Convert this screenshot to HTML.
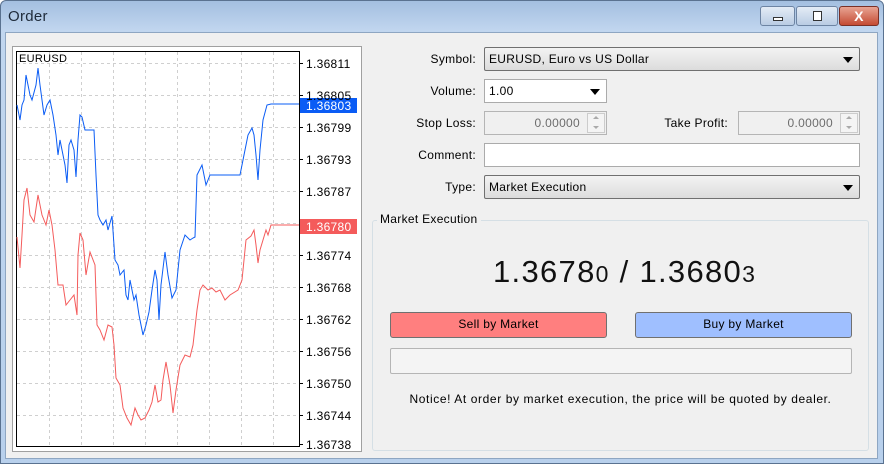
<!DOCTYPE html>
<html><head><meta charset="utf-8"><style>
*{box-sizing:border-box;margin:0;padding:0}
body{width:885px;height:464px;overflow:hidden;background:#fff;font-family:"Liberation Sans",sans-serif;font-size:12px;color:#000;position:relative;letter-spacing:0.3px}
.abs{position:absolute}
.frame{left:0;top:0;width:884px;height:464px;background:linear-gradient(#a3bfe0,#c1d6ef 30px,#b8d0ec);border:1px solid #5a7290;border-radius:6px 6px 0 0}
.client{left:5px;top:32px;width:873px;height:427px;background:#f0f0f0;border:1px solid #8ea6c2}
.lbl{text-align:right;width:120px;left:356px;font-size:12px}
.sel{background:linear-gradient(#f3f3f3,#dcdcdc);border:1px solid #707070;border-radius:2px;padding:4px 4px;font-size:12px}
.arr{position:absolute;right:6px;top:9px;width:0;height:0;border-left:5px solid transparent;border-right:5px solid transparent;border-top:6px solid #000}
.inp{background:#fff;border:1px solid #ababab;padding:4px;font-size:12px}
.dis{background:#f0f0f0;border:1px solid #b5b5b5;color:#6d6d6d;text-align:right;padding:4px 26px 4px 4px}
.spin{position:absolute;right:1px;top:1px;width:18px;height:20px;border:1px solid #ccc;background:#f4f4f4}
.spin:before{content:"";position:absolute;left:5px;top:2px;border-left:3px solid transparent;border-right:3px solid transparent;border-bottom:3px solid #aaa}
.spin:after{content:"";position:absolute;left:5px;top:12px;border-left:3px solid transparent;border-right:3px solid transparent;border-top:3px solid #aaa}
.btn{border:1px solid #707070;border-radius:3px;text-align:center;line-height:23px;font-size:12px}
.yl{left:306px;font-size:12px;color:#000}
</style></head><body>
<div class="abs frame"></div>
<div class="abs" style="left:8px;top:8px;font-size:15px;color:#1e2a3a">Order</div>
<div class="abs" style="left:760px;top:6px;width:35px;height:20px;border:1px solid #6d84a3;border-radius:3px;background:linear-gradient(#e4ecf6,#b9cce4)"><div class="abs" style="left:12px;top:10px;width:10px;height:4px;border:1px solid #333;background:#fff"></div></div>
<div class="abs" style="left:796px;top:6px;width:42px;height:20px;border:1px solid #6d84a3;border-radius:3px;background:linear-gradient(#e4ecf6,#b9cce4)"><div class="abs" style="left:16px;top:4px;width:9px;height:10px;border:1px solid #333;background:#fff"></div></div>
<div class="abs" style="left:839px;top:6px;width:40px;height:20px;border:1px solid #7a3026;border-radius:3px;background:linear-gradient(#e8a493,#c44b33);color:#fff;font-weight:bold;text-align:center;font-size:14px;line-height:18px">X</div>
<div class="abs client"></div>
<div class="abs" style="left:12px;top:46px;width:350px;height:406px;background:#fff;border:1px solid #a0a0a0"></div>
<svg class="abs" style="left:0;top:0" width="885" height="464">
<rect x="16.5" y="51.5" width="283" height="395" fill="#fff" stroke="#000"/>
<g stroke="#cfcfcf" stroke-dasharray="3,3">
<line x1="49.5" y1="52" x2="49.5" y2="446"/><line x1="81.5" y1="52" x2="81.5" y2="446"/><line x1="113.5" y1="52" x2="113.5" y2="446"/><line x1="145.5" y1="52" x2="145.5" y2="446"/><line x1="177.5" y1="52" x2="177.5" y2="446"/><line x1="209.5" y1="52" x2="209.5" y2="446"/><line x1="241.5" y1="52" x2="241.5" y2="446"/><line x1="273.5" y1="52" x2="273.5" y2="446"/>
<line x1="17" y1="63.5" x2="299" y2="63.5"/><line x1="17" y1="95.5" x2="299" y2="95.5"/><line x1="17" y1="127.5" x2="299" y2="127.5"/><line x1="17" y1="159.5" x2="299" y2="159.5"/><line x1="17" y1="191.5" x2="299" y2="191.5"/><line x1="17" y1="223.5" x2="299" y2="223.5"/><line x1="17" y1="255.5" x2="299" y2="255.5"/><line x1="17" y1="287.5" x2="299" y2="287.5"/><line x1="17" y1="319.5" x2="299" y2="319.5"/><line x1="17" y1="351.5" x2="299" y2="351.5"/><line x1="17" y1="383.5" x2="299" y2="383.5"/><line x1="17" y1="415.5" x2="299" y2="415.5"/>
</g>
<g stroke="#000"><line x1="300" y1="63.5" x2="303" y2="63.5"/><line x1="300" y1="95.5" x2="303" y2="95.5"/><line x1="300" y1="127.5" x2="303" y2="127.5"/><line x1="300" y1="159.5" x2="303" y2="159.5"/><line x1="300" y1="191.5" x2="303" y2="191.5"/><line x1="300" y1="223.5" x2="303" y2="223.5"/><line x1="300" y1="255.5" x2="303" y2="255.5"/><line x1="300" y1="287.5" x2="303" y2="287.5"/><line x1="300" y1="319.5" x2="303" y2="319.5"/><line x1="300" y1="351.5" x2="303" y2="351.5"/><line x1="300" y1="383.5" x2="303" y2="383.5"/><line x1="300" y1="415.5" x2="303" y2="415.5"/><line x1="300" y1="444.5" x2="303" y2="444.5"/></g>
<polyline fill="none" stroke="#0a5cf5" stroke-width="1" points="17,105 20,120 22,105 24,100 26,75 28,85 30,95 32,100 36,85 38,68 40,85 42,100 44,115 47,105 50,100 53,115 56,135 58,155 60,140 62,150 65,165 67,183 69,145 71,140 74,150 76,177 78,140 80,115 82,117 85,130 94,130 96,175 98,215 100,220 103,225 106,220 108,230 112,216 115,260 118,265 120,275 124,270 126,295 128,300 130,280 134,300 136,295 139,315 141,325 143,335 146,325 149,312 152,290 155,270 157,280 159,320 161,285 165,252 168,275 172,298 176,290 180,250 185,235 190,240 193,238 195,237 197,175 202,165 206,185 208,180 210,175 220,175 240,175 243,160 248,135 252,128 254,135 256,155 258,180 260,150 263,120 267,105 271,104 299,104"/>
<polyline fill="none" stroke="#f45b5b" stroke-width="1" points="17,237 20,268 22,235 24,200 27,188 30,215 34,222 38,195 42,215 46,225 49,210 52,225 55,250 58,285 63,285 66,305 70,300 74,295 77,315 78,255 80,233 83,240 86,275 90,252 95,265 97,325 100,330 104,340 108,325 112,327 114,345 116,378 120,385 123,408 127,418 131,425 135,408 138,415 141,420 145,418 149,410 152,402 155,385 158,402 161,400 163,380 166,362 170,385 173,413 176,390 180,365 185,355 190,357 193,345 197,310 200,290 203,285 208,290 212,288 216,292 220,290 225,300 230,295 238,290 242,280 246,240 251,236 254,230 256,245 258,263 260,250 263,240 266,230 268,235 271,225 299,225"/>
<rect x="300" y="98" width="57" height="15" fill="#0a5cf5"/>
<rect x="300" y="219" width="57" height="15" fill="#f45b5b"/>
</svg>
<div class="abs" style="left:19px;top:53px;font-size:11px">EURUSD</div>
<div class="abs yl" style="top:57px">1.36811</div>
<div class="abs yl" style="top:89px">1.36805</div>
<div class="abs yl" style="top:99px;color:#fff">1.36803</div>
<div class="abs yl" style="top:121px">1.36799</div>
<div class="abs yl" style="top:153px">1.36793</div>
<div class="abs yl" style="top:185px">1.36787</div>
<div class="abs yl" style="top:220px;color:#fff">1.36780</div>
<div class="abs yl" style="top:249px">1.36774</div>
<div class="abs yl" style="top:281px">1.36768</div>
<div class="abs yl" style="top:313px">1.36762</div>
<div class="abs yl" style="top:345px">1.36756</div>
<div class="abs yl" style="top:377px">1.36750</div>
<div class="abs yl" style="top:409px">1.36744</div>
<div class="abs yl" style="top:438px">1.36738</div>
<div class="abs lbl" style="top:52px">Symbol:</div>
<div class="abs sel" style="left:484px;top:47px;width:376px;height:24px">EURUSD, Euro vs US Dollar<div class="arr"></div></div>
<div class="abs lbl" style="top:84px">Volume:</div>
<div class="abs inp" style="left:484px;top:79px;width:123px;height:24px">1.00<div class="arr" style="top:9px"></div></div>
<div class="abs lbl" style="top:116px">Stop Loss:</div>
<div class="abs dis" style="left:484px;top:111px;width:123px;height:24px">0.00000<div class="spin"></div></div>
<div class="abs lbl" style="top:116px;left:608px">Take Profit:</div>
<div class="abs dis" style="left:738px;top:111px;width:122px;height:24px">0.00000<div class="spin"></div></div>
<div class="abs lbl" style="top:148px">Comment:</div>
<div class="abs inp" style="left:484px;top:143px;width:376px;height:24px"></div>
<div class="abs lbl" style="top:180px">Type:</div>
<div class="abs sel" style="left:484px;top:175px;width:376px;height:24px">Market Execution<div class="arr"></div></div>
<div class="abs" style="left:372px;top:220px;width:497px;height:231px;border:1px solid #d5dfe5;border-radius:3px"></div>
<div class="abs" style="left:377px;top:212px;background:#f0f0f0;padding:0 3px">Market Execution</div>
<div class="abs" style="left:493px;top:254px;font-size:31px;color:#111;white-space:nowrap;letter-spacing:1.3px">1.3678<span style="font-size:23px">0</span> / 1.3680<span style="font-size:23px">3</span></div>
<div class="abs btn" style="left:390px;top:312px;width:217px;height:26px;background:#ff7f7f">Sell by Market</div>
<div class="abs btn" style="left:635px;top:312px;width:217px;height:26px;background:#9fbfff">Buy by Market</div>
<div class="abs" style="left:390px;top:348px;width:462px;height:26px;border:1px solid #b5b5b5;border-radius:2px;background:#f4f4f4"></div>
<div class="abs" style="left:372px;top:392px;width:497px;text-align:center;letter-spacing:0.6px">Notice! At order by market execution, the price will be quoted by dealer.</div>
</body></html>
